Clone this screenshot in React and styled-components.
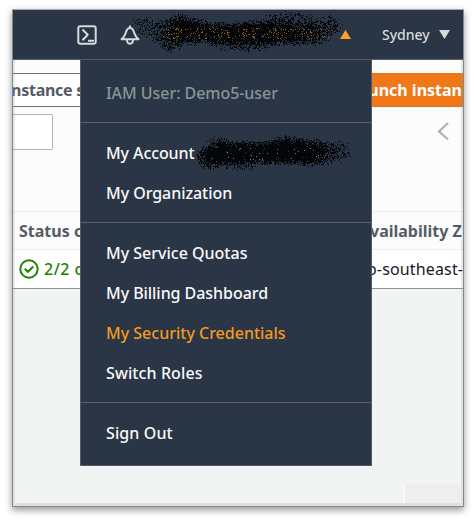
import React from "react";
import styled, { createGlobalStyle } from "styled-components";

const GlobalStyle = createGlobalStyle`
  * { box-sizing: border-box; }
  body { margin: 0; background: #fff; overflow: hidden; font-family: "Noto Sans", "Open Sans", sans-serif; }
`;

const Page = styled.div`
  width: 474px;
  height: 522px;
  padding: 9px 10px 15px 12px;
`;

const Frame = styled.div`
  position: relative;
  width: 452px;
  height: 498px;
  border: 1px solid #858888;
  border-top-color: #a5a9ad;
  background: #f2f4f4;
  box-shadow: 0 3px 7px rgba(0, 0, 0, 0.42);
  display: flex;
  flex-direction: column;
  overflow: hidden;
`;

const Bevel = styled.div`
  position: absolute;
  inset: 50px 0 0;
  border: solid rgba(140, 148, 148, 0.2);
  border-width: 0 2px 3px;
  pointer-events: none;
`;

const NavBar = styled.header`
  position: relative;
  height: 50px;
  flex: none;
  background: #2a3545;
  border-bottom: 1px solid #565f68;
  display: flex;
  align-items: center;
  padding-left: 64px;
`;

const NavIcon = styled.svg`
  width: 20px;
  height: 20px;
  margin-right: ${(p) => p.$gap || 0}px;
  fill: none;
  stroke: #d5dbdb;
  stroke-width: 2;
  stroke-linejoin: round;
  flex: none;
`;

const Arrow = styled.svg`
  width: 11px;
  height: 9px;
  fill: ${(p) => p.$color};
  margin-left: ${(p) => p.$left}px;
  flex: none;
`;

const Region = styled.span`
  font-size: 14px;
  font-weight: 500;
  color: #d5dbdb;
  margin-left: 31px;
  width: 48px;
  line-height: 20px;
  white-space: nowrap;
`;

const Scribble = styled.svg`
  position: absolute;
  left: ${(p) => p.$x}px;
  top: ${(p) => p.$y}px;
  pointer-events: none;
  shape-rendering: crispEdges;
`;

const Toolbar = styled.div`
  height: 151px;
  flex: none;
  background: #fcfcfc;
  padding-top: 13px;
`;

const ButtonRow = styled.div`
  display: flex;
  justify-content: space-between;
  height: 34px;
`;

const Button = styled.div`
  width: ${(p) => p.$w}px;
  height: 34px;
  overflow: hidden;
  display: flex;
  align-items: center;
  justify-content: ${(p) => (p.$primary ? "flex-end" : "flex-start")};
  border: solid ${(p) => (p.$primary ? "#ec7211" : "#687078")};
  border-width: 1px 0;
  background: ${(p) => (p.$primary ? "#f07818" : "#fff")};
  color: ${(p) => (p.$primary ? "#fff" : "#545b64")};
  font-size: 16px;
  font-weight: 700;
  white-space: nowrap;
  letter-spacing: ${(p) => p.$ls}px;
`;

const Shift = styled.span`
  flex: none;
  margin-left: ${(p) => p.$l || 0}px;
  margin-right: ${(p) => p.$r || 0}px;
`;

const FilterRow = styled.div`
  display: flex;
  justify-content: space-between;
  padding: 7px 13px 0 0;
`;

const FilterInput = styled.div`
  width: 40px;
  height: 36px;
  background: #fff;
  border: 1px solid #aab7b8;
  border-left: 0;
  border-radius: 0 2px 2px 0;
`;

const Chevron = styled.svg`
  width: 14px;
  height: 20px;
  margin-top: 7px;
  fill: none;
  stroke: #aab7b8;
  stroke-width: 2.3;
`;

const Row = styled.div`
  display: flex;
  justify-content: space-between;
  align-items: center;
  flex: none;
  height: ${(p) => (p.$head ? 38 : 40)}px;
  background: ${(p) => (p.$head ? "#fcfcfc" : "#fff")};
  border-top: 1px solid #eaeded;
  border-bottom: ${(p) => (p.$head ? "0" : "1px solid #879596")};
  font-size: 16px;
  font-weight: ${(p) => (p.$head ? 700 : 400)};
  color: ${(p) => (p.$head ? "#545b64" : "#16191f")};
`;

const Cell = styled.div`
  width: ${(p) => p.$w}px;
  overflow: hidden;
  white-space: nowrap;
  display: flex;
  align-items: center;
  letter-spacing: ${(p) => p.$ls || 0}px;
`;

const Status = styled(Cell)`
  color: #1d8102;
  font-weight: 500;
`;

const Check = styled.svg`
  width: 20px;
  height: 20px;
  margin: 0 5px 0 6px;
  fill: none;
  stroke: #1d8102;
  stroke-width: 2;
  flex: none;
`;

const Footnote = styled.div`
  align-self: flex-end;
  margin: auto 2px 3px 0;
  width: 57px;
  height: 19px;
  background: #eee;
  border-left: 1px solid #fff;
`;

const Menu = styled.nav`
  position: absolute;
  left: 67px;
  top: 49px;
  width: 292px;
  height: 407px;
  background: #2a3545;
  border: 1px solid #545b64;
`;

const Section = styled.div`
  height: ${(p) => p.$h}px;
  padding: ${(p) => p.$top}px 0 0 25px;
  border-bottom: ${(p) => (p.$last ? "0" : "1px solid #59616a")};
`;

const Item = styled.div`
  height: 40px;
  line-height: 40px;
  font-size: 16px;
  font-weight: 500;
  color: ${(p) => p.$color || "#fafafa"};
  letter-spacing: ${(p) => p.$ls || 0}px;
  white-space: nowrap;
`;

function random(seed) {
  let a = seed;
  return () => {
    a = (a + 0x6d2b79f5) | 0;
    let t = Math.imul(a ^ (a >>> 15), 1 | a);
    t = (t + Math.imul(t ^ (t >>> 7), 61 | t)) ^ t;
    return ((t ^ (t >>> 14)) >>> 0) / 4294967296;
  };
}

// Sprays 1px dots around a chain of blobs: [x, y, radiusX, radiusY, strength].
function spray(seed, w, h, blobs, fleckBand, fleckRate) {
  const rnd = random(seed);
  let ink = "";
  let flecks = "";
  for (let x = 0; x < w; x++) {
    for (let y = 0; y < h; y++) {
      let clear = 1;
      for (const [bx, by, rx, ry, k] of blobs) {
        const d = ((x - bx) / rx) ** 2 + ((y - by) / ry) ** 2;
        if (d < 1) clear *= 1 - k * Math.min(1, (1 - d) * 1.3);
      }
      if (rnd() < 1 - clear) {
        const inBand = y > fleckBand[0] && y < fleckBand[1] && x > fleckBand[2] && x < fleckBand[3];
        if (inBand && rnd() < fleckRate) flecks += `M${x} ${y}h1v1h-1z`;
        else ink += `M${x} ${y}h1v1h-1z`;
      }
    }
  }
  return { ink, flecks };
}

const navInk = spray(
  7, 214, 44,
  [
    [14, 16, 17, 11, 0.25], [28, 21, 16, 14, 0.3], [40, 30, 14, 13, 0.6], [49, 18, 20, 15, 0.85], [62, 21, 22, 15, 0.9],
    [86, 23, 24, 13, 0.8], [106, 24, 24, 14, 0.9], [128, 22, 26, 14, 0.9], [146, 22, 24, 14, 0.8],
    [165, 23, 24, 13, 0.8], [158, 10, 30, 10, 0.35], [112, 34, 36, 8, 0.35], [183, 22, 20, 14, 0.6], [198, 15, 15, 12, 0.35],
  ],
  [17, 29, 31, 199], 0.1
);
const accountInk = spray(
  19, 156, 42,
  [
    [13, 24, 15, 14, 0.85], [20, 10, 12, 8, 0.35], [28, 20, 22, 14, 0.95], [48, 20, 24, 14, 0.95],
    [70, 19, 25, 14, 0.95], [92, 18, 26, 15, 0.95], [110, 19, 24, 15, 0.9], [124, 20, 20, 13, 0.6],
    [142, 18, 14, 12, 0.3], [40, 31, 24, 7, 0.3], [92, 9, 24, 8, 0.35],
  ],
  [14, 27, 5, 130], 0.018
);

export default function App() {
  return (
    <>
      <GlobalStyle />
      <Page>
        <Frame>
          <NavBar>
            <NavIcon $gap={23} viewBox="0 0 20 20">
              <rect x="1.3" y="1.3" width="17.4" height="17.4" rx="2" />
              <path d="M5.500 4.500l5.200 5.200-5.200 5.500M11 15.800h6" />
            </NavIcon>
            <NavIcon viewBox="0 0 20 20">
              <path d="M10 .5v2.300M1.500 14.200h17c-2.300-1.800-3.400-3.400-4.200-6.200C13.500 4.800 12.500 3 10 3S6.500 4.800 5.700 8c-.8 2.800-1.900 4.400-4.200 6.200zM7 14.500c0 5.600 6 5.600 6 0" />
            </NavIcon>
            <Arrow $left={200} $color="#ff9e28" viewBox="0 0 11 9">
              <path d="M5.500 0L11 9H0z" />
            </Arrow>
            <Region>Sydney</Region>
            <Arrow $left={9} $color="#d5dbdb" viewBox="0 0 11 9">
              <path d="M0 0h11L5.500 9z" />
            </Arrow>
            <Scribble $x={118} $y={0} width="214" height="44">
              <path d={navInk.ink} fill="#050607" />
              <path d={navInk.flecks} fill="#9b5c12" />
            </Scribble>
          </NavBar>

          <Toolbar>
            <ButtonRow>
              <Button $w={68} $ls={-0.25}><Shift $l={-2}>nstance s</Shift></Button>
              <Button $w={92} $primary $ls={0}><Shift $r={1}>unch instan</Shift></Button>
            </ButtonRow>
            <FilterRow>
              <FilterInput />
              <Chevron viewBox="0 0 14 20"><path d="M12 2L3 10.500l9 8" /></Chevron>
            </FilterRow>
          </Toolbar>

          <Row $head>
            <Cell $w={68} $ls={0}><Shift $l={6}>Status c</Shift></Cell>
            <Cell $w={92} $ls={0}><Shift $l={-1}>vailability Z</Shift></Cell>
          </Row>
          <Row>
            <Status $w={68} $ls={0.5}>
              <Check viewBox="0 0 20 20">
                <circle cx="10" cy="10" r="8.700" />
                <path d="M5.800 9.800l3 3 5.500-5.200" />
              </Check>
              2/2 c
            </Status>
            <Cell $w={92} $ls={0.15}><Shift $l={-4}>o-southeast-</Shift></Cell>
          </Row>
          <Footnote />
          <Bevel />

          <Menu>
            <Section $h={63} $top={13}>
              <Item $color="#879596" $ls={-0.05}>IAM User: Demo5-user</Item>
            </Section>
            <Section $h={100} $top={10}>
              <Item $ls={-0.1}>My Account</Item>
              <Item $ls={-0.05}>My Organization</Item>
            </Section>
            <Section $h={180} $top={10}>
              <Item>My Service Quotas</Item>
              <Item $ls={-0.05}>My Billing Dashboard</Item>
              <Item $color="#f39a23">My Security Credentials</Item>
              <Item $ls={0.1}>Switch Roles</Item>
            </Section>
            <Section $h={62} $top={10} $last>
              <Item $ls={0.1}>Sign Out</Item>
            </Section>
            <Scribble $x={116} $y={73} width="156" height="42">
              <path d={accountInk.ink} fill="#050607" />
              <path d={accountInk.flecks} fill="#8b8d86" opacity="0.8" />
            </Scribble>
          </Menu>
        </Frame>
      </Page>
    </>
  );
}
